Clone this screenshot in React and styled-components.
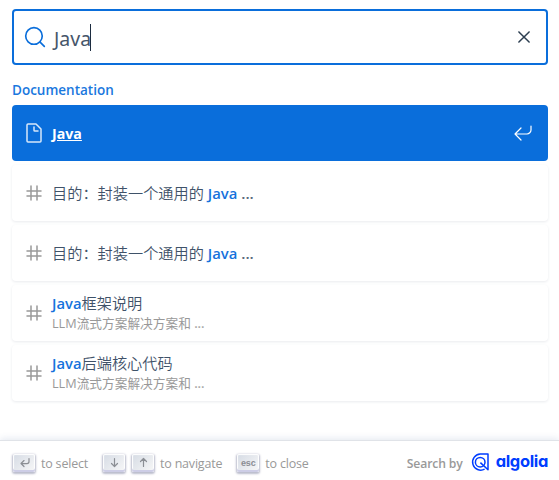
import React from "react";
import styled, { createGlobalStyle, css } from "styled-components";

const Global = createGlobalStyle`
  * { box-sizing: border-box; }
  html, body { margin: 0; height: 100%; overflow: hidden; background: #fff; }
  body { font-family: "Open Sans", "Noto Sans CJK SC", sans-serif; }
`;

const Modal = styled.div`
  display: flex;
  flex-direction: column;
  width: 559px;
  height: 480px;
  overflow: hidden;
  background: #fff;
`;

const SearchBar = styled.header`
  padding: 9px 11px 0 12px;
`;

const SearchForm = styled.div`
  display: flex;
  align-items: center;
  height: 56px;
  padding: 0 14px 0 12px;
  border-radius: 4px;
  box-shadow: inset 0 0 0 2px #0a6edb;
  color: #0a6edb;
`;

const Query = styled.div`
  display: flex;
  align-items: center;
  flex: 1;
  margin-left: 8px;
  color: #46566a;
  font-family: "Noto Sans", "Open Sans", sans-serif;
  font-size: 19.5px;
  font-weight: 400;
  line-height: 28px;

  span {
    margin-top: 4px;
  }
`;

const Caret = styled.i`
  width: 1px;
  height: 27px;
  margin-left: -1px;
  background: #1c2c40;
`;

const ClearButton = styled.button`
  display: flex;
  padding: 0;
  border: 0;
  background: none;
  color: #2c3e50;
`;

const Results = styled.main`
  flex: 1;
  padding: 0 11px 0 12px;
`;

const GroupTitle = styled.h2`
  height: 32px;
  margin: 8px 0 0;
  color: #1a78de;
  font-size: 13.5px;
  font-weight: 600;
  line-height: 34px;
`;

const HitList = styled.ul`
  display: grid;
  gap: 4px;
  margin: 0;
  padding: 0;
  list-style: none;
`;

const Hit = styled.li`
  display: flex;
  align-items: center;
  height: 56px;
  padding: 0 15px 0 12px;
  border-radius: 4px;
  background: #fff;
  color: #3f5269;
  box-shadow: 0 1px 3px 0 #e9ebee;
  ${(p) =>
    p.$selected &&
    css`
      background: #0a6edb;
      color: #fff;
      box-shadow: none;
    `}
`;

const HitBody = styled.div`
  flex: 1;
  margin-left: 8px;
`;

const HitTitle = styled.div`
  font-size: 15.2px;
  font-weight: 350;
  line-height: 20px;
  white-space: pre;
`;

const HitPath = styled.div`
  color: #999;
  font-size: 12.7px;
  line-height: 20px;
`;

const Mark = styled.mark`
  background: none;
  color: ${(p) => (p.$selected ? "#fff" : "#1672dc")};
  font-size: ${(p) => (p.$selected ? 14.2 : 14.8)}px;
  font-weight: ${(p) => (p.$selected ? 700 : 600)};
  text-decoration: ${(p) => (p.$selected ? "underline" : "none")};
`;

const Ellipsis = styled.span`
  font-weight: 600;
  opacity: 0.85;
`;

const Footer = styled.footer`
  display: flex;
  align-items: center;
  justify-content: space-between;
  flex: none;
  height: 44px;
  margin-bottom: -5px;
  padding: 0 11px 0 13px;
  color: #999;
  font-size: 12.5px;
  letter-spacing: -0.2px;
  box-shadow: 0 -1px 0 0 #e0e3e8, 0 -3px 6px 0 rgba(69, 98, 155, 0.12);
`;

const Commands = styled.ul`
  display: flex;
  margin: 0;
  padding: 0;
  list-style: none;
`;

const Command = styled.li`
  display: flex;
  align-items: center;
  margin-right: ${(p) => p.$gap}px;
`;

const Key = styled.kbd`
  display: flex;
  align-items: center;
  justify-content: center;
  width: 22px;
  height: 18px;
  margin: 0 6px 0 0;
  padding-bottom: 1px;
  border-radius: 2px;
  color: #8b8e94;
  background: linear-gradient(-225deg, #d5dbe4, #f8f8f8);
  box-shadow: inset 0 -2px 0 0 #cdcde6, inset 0 0 1px 1px #fff,
    0 1px 2px 1px rgba(30, 35, 90, 0.3);
  font: 700 9px/12px "Liberation Sans", sans-serif;

  & + & {
    margin-left: 1px;
  }
`;

const Credit = styled.div`
  display: flex;
  align-items: center;
  font-size: 12.2px;
  font-weight: 600;
  letter-spacing: -0.14px;
`;

const Wordmark = styled.span`
  margin: -4px 0 0 7px;
  color: #003dff;
  font-family: Inter, sans-serif;
  font-size: 16.5px;
  font-weight: 700;
  line-height: 20px;
  letter-spacing: -0.35px;
  font-feature-settings: "cv11";
`;

const Icon = ({ d, size = 20, box = 20, width = 1.4 }) => (
  <svg
    width={size}
    height={size}
    viewBox={`0 0 ${box} ${box}`}
    fill="none"
    stroke="currentColor"
    strokeWidth={width}
    strokeLinecap="round"
    strokeLinejoin="round"
  >
    <path d={d} />
  </svg>
);

const PATHS = {
  search:
    "M14.386 14.386l4.0877 4.0877-4.0877-4.0877c-2.9418 2.9419-7.7115 2.9419-10.6533 0-2.9419-2.9418-2.9419-7.7115 0-10.6533 2.9418-2.9419 7.7115-2.9419 10.6533 0 2.9419 2.9418 2.9419 7.7115 0 10.6533z",
  close: "M4.91 4.91l10.18 10.18M15.09 4.91L4.91 15.09",
  page: "M17 6v12c0 .52-.2 1-1 1H4c-.7 0-1-.33-1-1V2c0-.55.42-1 1-1h8l5 5zM14 8h-3.13c-.51 0-.87-.34-.87-.87V4",
  hash: "M3 8h14M3 13h14M7 3v14M13 3v14",
  enter: "M18 3v4c0 2-2 4-4 4H2M8 17l-6-6 6-6",
  keyEnter: "M12 3.53v3c0 1-1 2-2 2H4M7 11.53l-3-3 3-3",
  keyDown: "M7.5 3.5v8M10.5 8.5l-3 3-3-3",
  keyUp: "M7.5 11.5v-8M10.5 6.5l-3-3-3 3",
};

const HitIcon = styled.span`
  display: flex;
  color: ${(p) => (p.$selected ? "#d8e8fa" : "#999")};
`;

const AlgoliaMark = styled.svg`
  margin: -2px 0 0 8px;
`;

const HITS = [
  { mark: "Java", selected: true },
  { before: "目的：封装一个通用的 ", mark: "Java", more: true },
  { before: "目的：封装一个通用的 ", mark: "Java", more: true },
  { mark: "Java", after: "框架说明", path: "LLM流式方案解决方案和 " },
  { mark: "Java", after: "后端核心代码", path: "LLM流式方案解决方案和 " },
];

export default function App() {
  return (
    <>
      <Global />
      <Modal>
        <SearchBar>
          <SearchForm>
            <Icon d={PATHS.search} size={22} width={1.5} />
            <Query>
              <span>Java</span>
              <Caret />
            </Query>
            <ClearButton aria-label="Clear">
              <Icon d={PATHS.close} width={1.5} />
            </ClearButton>
          </SearchForm>
        </SearchBar>
        <Results>
          <GroupTitle>Documentation</GroupTitle>
          <HitList>
            {HITS.map((hit, i) => (
              <Hit key={i} $selected={hit.selected}>
                <HitIcon $selected={hit.selected}>
                  <Icon d={hit.selected ? PATHS.page : PATHS.hash} width={1.5} />
                </HitIcon>
                <HitBody>
                  <HitTitle>
                    {hit.before}
                    <Mark $selected={hit.selected}>{hit.mark}</Mark>
                    {hit.after}
                    {hit.more && <Ellipsis> ...</Ellipsis>}
                  </HitTitle>
                  {hit.path && (
                    <HitPath>
                      {hit.path}
                      <Ellipsis>...</Ellipsis>
                    </HitPath>
                  )}
                </HitBody>
                {hit.selected && <Icon d={PATHS.enter} width={1.2} />}
              </Hit>
            ))}
          </HitList>
        </Results>
        <Footer>
          <Commands>
            <Command $gap={15}>
              <Key><Icon d={PATHS.keyEnter} size={15} box={15} width={1.2} /></Key>
              to select
            </Command>
            <Command $gap={15}>
              <Key><Icon d={PATHS.keyDown} size={15} box={15} width={1.2} /></Key>
              <Key><Icon d={PATHS.keyUp} size={15} box={15} width={1.2} /></Key>
              to navigate
            </Command>
            <Command $gap={0}>
              <Key>esc</Key>
              to close
            </Command>
          </Commands>
          <Credit>
            Search by
            <AlgoliaMark width="18" height="19" viewBox="0 0 18 19" fill="none" stroke="#003dff">
              <path
                d="M13.6 16.2A8.1 8.1 0 1 1 9.2 1H17v15.8L9.4 9.6"
                strokeWidth="1.5"
                strokeLinejoin="round"
              />
              <circle cx="9.2" cy="9.2" r="4.8" strokeWidth="1.5" />
            </AlgoliaMark>
            <Wordmark>algolia</Wordmark>
          </Credit>
        </Footer>
      </Modal>
    </>
  );
}
